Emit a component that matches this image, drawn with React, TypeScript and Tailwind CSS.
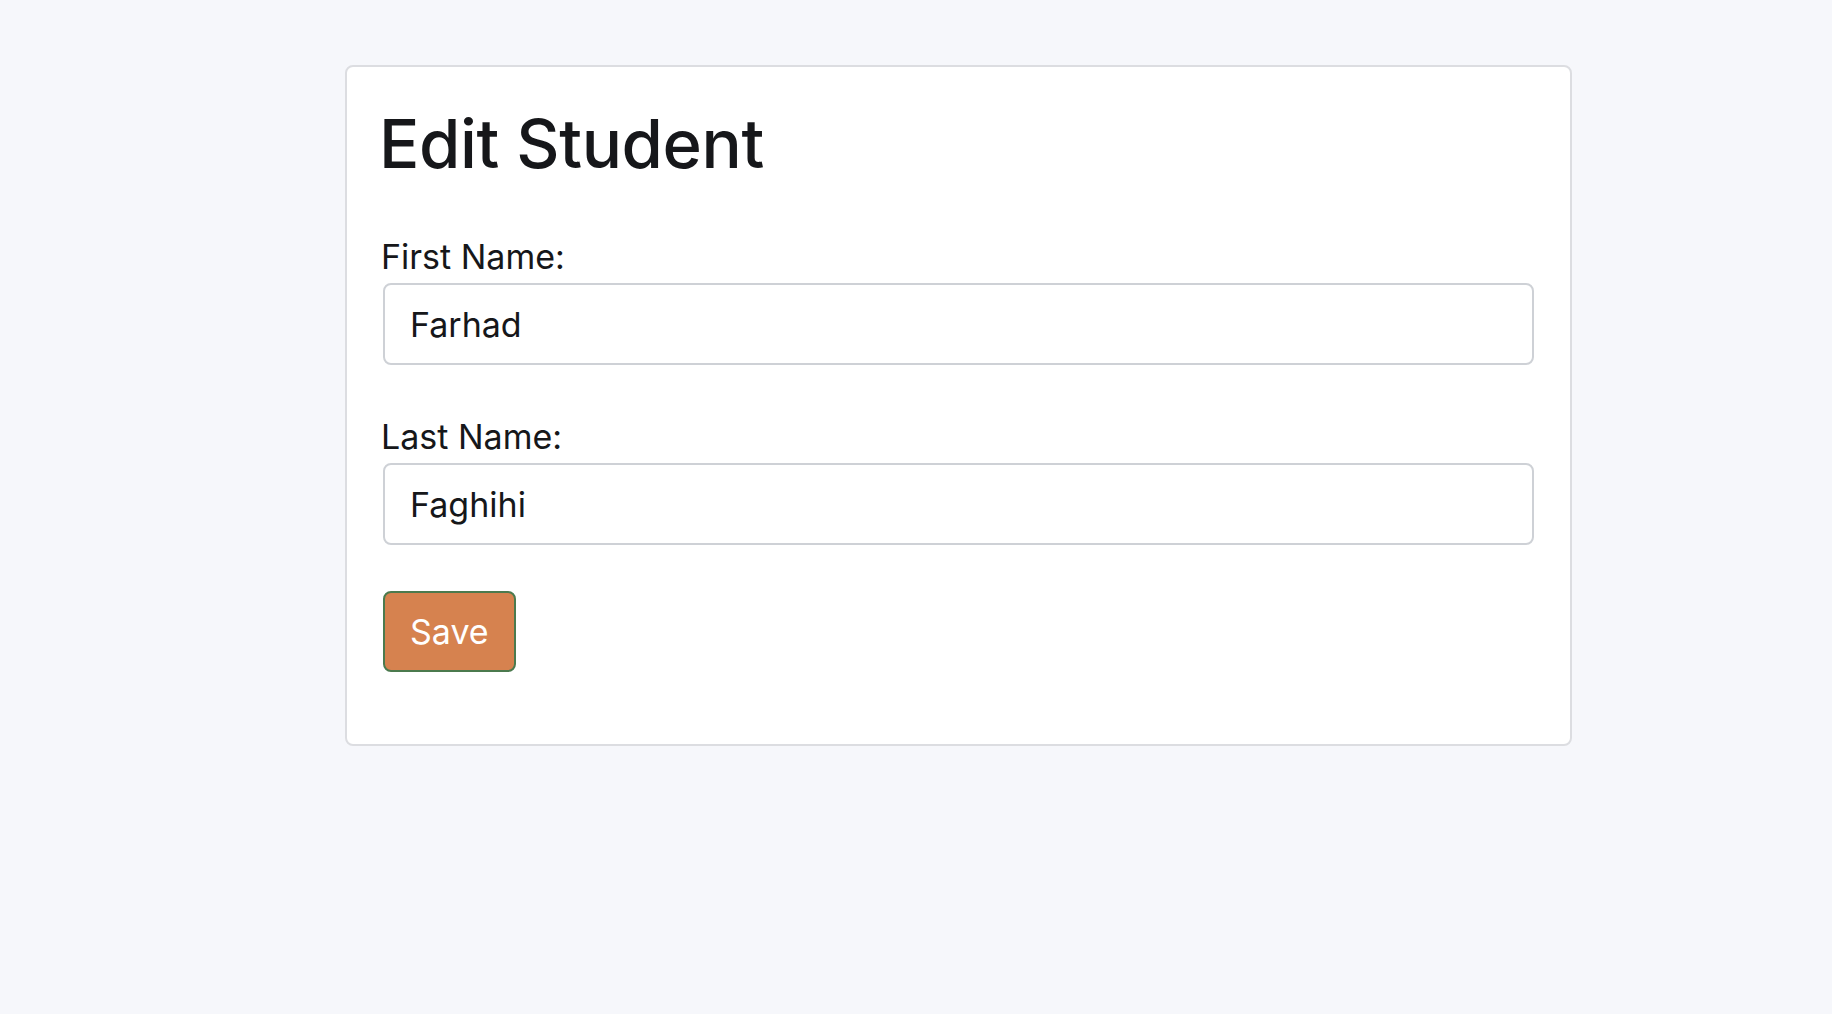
import { useState } from "react";

const Field = ({
  label,
  value,
  onChange,
}: {
  label: string;
  value: string;
  onChange: (v: string) => void;
}) => (
  <div className="mb-[52px] flex flex-col">
    <label className="-ml-[2px] text-[34px] leading-[40px] text-[#16171a]">
      {label}
    </label>
    <input
      type="text"
      value={value}
      onChange={(e) => onChange(e.target.value)}
      className="mt-[6px] h-[82px] w-full rounded-[8px] border-2 border-[#ced1d6] bg-white px-[25px] text-[34px] text-[#16171a] outline-none"
    />
  </div>
);

const App = () => {
  const [firstName, setFirstName] = useState("Farhad");
  const [lastName, setLastName] = useState("Faghihi");

  return (
    <div
      className="min-h-screen bg-[#f6f7fb] pt-[65px]"
      style={{ fontFamily: "Inter, 'Noto Sans', sans-serif" }}
    >
      <div className="ml-[345px] w-[1227px] rounded-[8px] border-2 border-[#dcdde1] bg-white p-9">
        <h1 className="-ml-[4px] mt-px mb-[53px] text-[67px] font-medium leading-[1.2] tracking-[-0.4px] text-[#16171a]">
          Edit Student
        </h1>
        <form onSubmit={(e) => e.preventDefault()}>
          <Field label="First Name:" value={firstName} onChange={setFirstName} />
          <div className="-mb-[6px]">
            <Field label="Last Name:" value={lastName} onChange={setLastName} />
          </div>
          <button
            type="submit"
            className="mb-[36px] h-[81px] rounded-[8px] border-2 border-[#4b7a4e] bg-[#d6824f] px-[25px] text-[34px] text-white"
          >
            Save
          </button>
        </form>
      </div>
    </div>
  );
};

export default App;
